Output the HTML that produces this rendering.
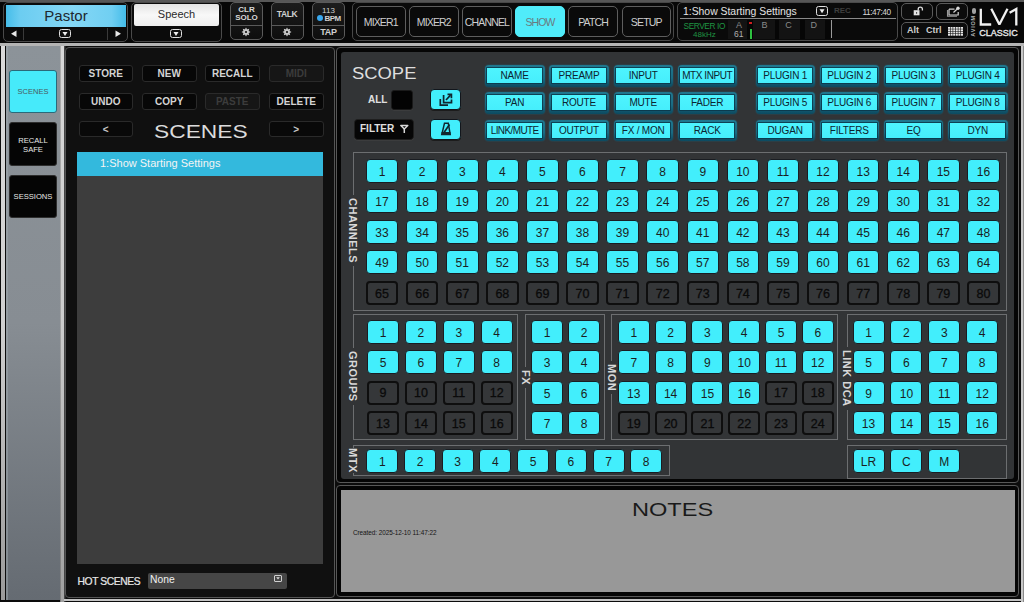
<!DOCTYPE html><html><head><meta charset="utf-8"><style>
*{margin:0;padding:0;box-sizing:border-box}
html,body{width:1024px;height:602px;overflow:hidden;background:#0c0c0c;font-family:"Liberation Sans",sans-serif;position:relative}
.ab{position:absolute}
.t{position:absolute;white-space:nowrap;line-height:1}
.cb{position:absolute;background:#42eefc;border:1.5px solid #1a1d22;border-radius:4px;color:#1a1e22;font-size:12px;display:flex;align-items:center;justify-content:center;line-height:1;padding-top:2px}
.db{position:absolute;background:#353739;border:2px solid #0e0e0e;border-radius:4px;color:#0a0a0a;font-size:12.5px;display:flex;align-items:center;justify-content:center;line-height:1;padding-top:2px;-webkit-text-stroke:0.3px #0a0a0a}
.grp{position:absolute;border:1px solid #6c6e70}
.vl{position:absolute;writing-mode:vertical-rl;color:#d8d8d8;font-weight:bold;font-size:11px;background:#323436;line-height:1;letter-spacing:0.5px}
.sb{position:absolute;background:linear-gradient(#1f7890,#1a6a82 60%,#0c4a60);border-radius:4px;box-shadow:0 0 1.5px #1a6880}
.si{position:absolute;left:2.4px;right:2.6px;top:3.2px;bottom:3.6px;background:linear-gradient(#4ef4fe,#46eefc);box-shadow:0 0 0 0.8px #0b3546;color:#0c2430;font-size:10px;display:flex;align-items:center;justify-content:center;line-height:1;padding-top:1px}
.ib{position:absolute;background:#42eefc;border:1.3px solid #12161c;border-radius:4px;box-shadow:0 1px 0 #1c1c1c}
.kb{position:absolute;background:#090909;border:1px solid #2a2a2a;border-radius:3px;color:#c6c6c6;font-size:10px;font-weight:bold;display:flex;align-items:center;justify-content:center;line-height:1;padding-top:1.5px}
.nb{position:absolute;background:#0a0a0a;border:1px solid #5e5e5e;border-radius:5px;color:#cfcfcf;font-size:10.5px;display:flex;align-items:center;justify-content:center;line-height:1;letter-spacing:-0.85px;padding-top:2px}
.tb{position:absolute;background:linear-gradient(#1c1c1c,#0e0e0e);border:1px solid #5a5a5a;border-radius:5px}
</style></head><body>
<div class="ab" style="left:0;top:0;width:1024px;height:44px;background:#070707"></div>
<div class="ab" style="left:0;top:0;width:1024px;height:2px;background:#575757"></div>
<div class="ab" style="left:0;top:43px;width:1024px;height:3px;background:#b4b4b4"></div>
<div class="ab" style="left:3px;top:2px;width:125px;height:40px;background:#0b0b0b;border:1px solid #4a4a4a;border-radius:5px"></div>
<div class="ab" style="left:6px;top:5px;width:120px;height:22px;background:linear-gradient(90deg,#46bde9,#6ccdf1 12%,#84d7f5 55%,#70cff2 88%,#44bce9);"></div>
<div class="t" style="left:6px;top:8px;width:120px;text-align:center;font-size:15px;color:#202830">Pastor</div>
<div class="ab" style="left:23px;top:28px;width:1px;height:12px;background:#3a3a3a"></div>
<div class="ab" style="left:107px;top:28px;width:1px;height:12px;background:#3a3a3a"></div>
<svg class="ab" style="left:9px;top:29px" width="10" height="10"><polygon points="7.5,1.5 7.5,8 2,4.8" fill="#e8e8e8"/></svg>
<svg class="ab" style="left:113px;top:29px" width="10" height="10"><polygon points="2.5,1.5 2.5,8 8,4.8" fill="#e8e8e8"/></svg>
<div class="ab" style="left:58.5px;top:28.8px;width:12px;height:9.5px;border:1.5px solid #e0e0e0;border-radius:2.5px;background:#111"></div>
<svg class="ab" style="left:58.5px;top:28.8px" width="12" height="9.5"><polygon points="3.5,2.95 8.5,2.95 6.0,6.95" fill="#f0f0f0"/></svg>
<div class="ab" style="left:131px;top:2px;width:91px;height:40px;background:#0b0b0b;border:1px solid #4a4a4a;border-radius:5px"></div>
<div class="ab" style="left:134px;top:4px;width:85px;height:22px;background:linear-gradient(#e4e4e4,#f8f8f8 50%,#eeeeee);border-radius:2px"></div>
<div class="t" style="left:134px;top:9px;width:85px;text-align:center;font-size:11px;color:#2a2a2a">Speech</div>
<div class="ab" style="left:170px;top:28.8px;width:12px;height:9.5px;border:1.5px solid #e0e0e0;border-radius:2.5px;background:#111"></div>
<svg class="ab" style="left:170px;top:28.8px" width="12" height="9.5"><polygon points="3.5,2.95 8.5,2.95 6.0,6.95" fill="#f0f0f0"/></svg>
<div class="tb" style="left:230px;top:2px;width:33px;height:38px"></div>
<div class="ab" style="left:231px;top:25px;width:31px;height:1px;background:#5a5a5a"></div>
<div class="tb" style="left:271px;top:2px;width:33px;height:38px"></div>
<div class="ab" style="left:272px;top:25px;width:31px;height:1px;background:#5a5a5a"></div>
<div class="tb" style="left:312px;top:2px;width:33px;height:38px"></div>
<div class="ab" style="left:313px;top:25px;width:31px;height:1px;background:#5a5a5a"></div>
<div class="t" style="left:230px;top:6px;width:33px;text-align:center;font-size:8px;font-weight:bold;color:#d8d8d8;line-height:8px">CLR<br>SOLO</div>
<div class="t" style="left:270.5px;top:10px;width:33px;text-align:center;font-size:8.5px;font-weight:bold;color:#d0d0d0;letter-spacing:-0.4px">TALK</div>
<div class="t" style="left:312px;top:6.8px;width:33px;text-align:center;font-size:8px;color:#d0d0d0">113</div>
<div class="ab" style="left:317px;top:15px;width:6px;height:6px;border-radius:50%;background:#39a8ee"></div>
<div class="t" style="left:324.5px;top:14.8px;font-size:8px;font-weight:bold;color:#d0d0d0;letter-spacing:-0.5px">BPM</div>
<div class="t" style="left:312px;top:27.5px;width:33px;text-align:center;font-size:9px;font-weight:bold;color:#d0d0d0;letter-spacing:-0.3px">TAP</div>
<svg class="ab" style="left:240.7px;top:27px" width="10" height="10" viewBox="-5 -5 10 10"><g fill="#c8c8c8"><circle r="3"/><path d="M-1 -2.8 L0 -4.5 L1 -2.8 Z" transform="rotate(0)"/><path d="M-1 -2.8 L0 -4.5 L1 -2.8 Z" transform="rotate(45)"/><path d="M-1 -2.8 L0 -4.5 L1 -2.8 Z" transform="rotate(90)"/><path d="M-1 -2.8 L0 -4.5 L1 -2.8 Z" transform="rotate(135)"/><path d="M-1 -2.8 L0 -4.5 L1 -2.8 Z" transform="rotate(180)"/><path d="M-1 -2.8 L0 -4.5 L1 -2.8 Z" transform="rotate(225)"/><path d="M-1 -2.8 L0 -4.5 L1 -2.8 Z" transform="rotate(270)"/><path d="M-1 -2.8 L0 -4.5 L1 -2.8 Z" transform="rotate(315)"/><circle r="1.1" fill="#111"/></g></svg>
<svg class="ab" style="left:281.8px;top:27px" width="10" height="10" viewBox="-5 -5 10 10"><g fill="#c8c8c8"><circle r="3"/><path d="M-1 -2.8 L0 -4.5 L1 -2.8 Z" transform="rotate(0)"/><path d="M-1 -2.8 L0 -4.5 L1 -2.8 Z" transform="rotate(45)"/><path d="M-1 -2.8 L0 -4.5 L1 -2.8 Z" transform="rotate(90)"/><path d="M-1 -2.8 L0 -4.5 L1 -2.8 Z" transform="rotate(135)"/><path d="M-1 -2.8 L0 -4.5 L1 -2.8 Z" transform="rotate(180)"/><path d="M-1 -2.8 L0 -4.5 L1 -2.8 Z" transform="rotate(225)"/><path d="M-1 -2.8 L0 -4.5 L1 -2.8 Z" transform="rotate(270)"/><path d="M-1 -2.8 L0 -4.5 L1 -2.8 Z" transform="rotate(315)"/><circle r="1.1" fill="#111"/></g></svg>
<div class="ab" style="left:352px;top:2px;width:322px;height:39px;border:1px solid #484848;border-radius:5px;background:#0a0a0a"></div>
<div class="nb" style="left:356.0px;top:6px;width:49.5px;height:31px">MIXER1</div>
<div class="nb" style="left:409.1px;top:6px;width:49.5px;height:31px">MIXER2</div>
<div class="nb" style="left:462.2px;top:6px;width:49.5px;height:31px">CHANNEL</div>
<div class="nb" style="left:515.3px;top:6px;width:49.5px;height:31px;background:#50ecfa;border-color:#50ecfa;color:#6a7a80">SHOW</div>
<div class="nb" style="left:568.4px;top:6px;width:49.5px;height:31px">PATCH</div>
<div class="nb" style="left:621.5px;top:6px;width:49.5px;height:31px">SETUP</div>
<div class="ab" style="left:677px;top:2px;width:221px;height:39px;border:1px solid #4a4a4a;border-radius:5px;background:#0a0a0a"></div>
<div class="t" style="left:683px;top:6.8px;font-size:10.4px;color:#e4e4e4">1:Show Starting Settings</div>
<div class="ab" style="left:816px;top:6px;width:12px;height:10px;border:1.5px solid #e0e0e0;border-radius:2.5px;background:#111"></div>
<svg class="ab" style="left:816px;top:6px" width="12" height="10"><polygon points="3.5,3.2 8.5,3.2 6.0,7.2" fill="#f0f0f0"/></svg>
<div class="t" style="left:834px;top:7px;font-size:8px;font-weight:bold;color:#3e3e3e">REC</div>
<div class="t" style="left:862.5px;top:7.5px;font-size:8.3px;color:#d8d8d8;letter-spacing:-0.45px">11:47:40</div>
<div class="ab" style="left:680px;top:18px;width:216px;height:1px;background:#8a8a8a"></div>
<div class="t" style="left:683.5px;top:21.8px;font-size:8.3px;color:#1f9442;letter-spacing:-0.4px">SERVER IO</div>
<div class="t" style="left:693px;top:31px;font-size:8px;color:#1f9442">48kHz</div>
<div class="ab" style="left:728px;top:20px;width:102px;height:19px;background:#131313"></div>
<div class="ab" style="left:746.5px;top:20px;width:6px;height:19px;background:#060606"></div>
<div class="ab" style="left:774.5px;top:20px;width:4px;height:19px;background:#060606"></div>
<div class="ab" style="left:799.5px;top:20px;width:5px;height:19px;background:#060606"></div>
<div class="ab" style="left:825px;top:20px;width:5px;height:19px;background:#060606"></div>
<div class="t" style="left:736px;top:20.5px;font-size:9px;color:#8a8a8a">A</div>
<div class="t" style="left:761.5px;top:20.5px;font-size:9px;color:#8a8a8a">B</div>
<div class="t" style="left:785.3px;top:20.5px;font-size:9px;color:#8a8a8a">C</div>
<div class="t" style="left:810.5px;top:20.5px;font-size:9px;color:#8a8a8a">D</div>
<div class="t" style="left:734px;top:30px;font-size:8.5px;color:#b0b0b0">61</div>
<div class="ab" style="left:749px;top:22px;width:3px;height:2px;background:#d02020"></div>
<div class="ab" style="left:750px;top:29px;width:2px;height:10px;background:#2ec040"></div>
<div class="ab" style="left:831px;top:20px;width:1px;height:18px;background:#9a9a9a"></div>
<div class="tb" style="left:901px;top:3px;width:32px;height:17px;background:#0c0c0c"></div>
<div class="tb" style="left:936px;top:3px;width:32px;height:17px;background:#0c0c0c"></div>
<div class="tb" style="left:901px;top:22px;width:67px;height:17px;background:#0c0c0c"></div>
<svg class="ab" style="left:912px;top:6px" width="12" height="11"><path d="M6.2 4.3 V3.2 A2.1 2.1 0 0 1 10.4 3.2 V4.6" stroke="#e0e0e0" stroke-width="1.3" fill="none"/><rect x="1.7" y="4.2" width="5.8" height="5.1" fill="#e4e4e4"/><rect x="4.2" y="6" width="0.9" height="1.8" fill="#333"/></svg>
<svg class="ab" style="left:946px;top:6px" width="14" height="11"><path d="M1.5 4 V10.2 H11" stroke="#9a9a9a" stroke-width="1.1" fill="none"/><path d="M3 3.2 H8.5 M3 3.2 V9 H12.2 V6" stroke="#d4d4d4" stroke-width="1.2" fill="none"/><path d="M7.5 6.5 L11.2 3" stroke="#d4d4d4" stroke-width="1.2"/><circle cx="12" cy="2.2" r="1.7" fill="#dcdcdc"/></svg>
<div class="t" style="left:907px;top:26px;font-size:9px;font-weight:bold;color:#cfcfcf">Alt</div>
<div class="t" style="left:926px;top:26px;font-size:9px;font-weight:bold;color:#cfcfcf">Ctrl</div>
<svg class="ab" style="left:947.5px;top:26.5px" width="16" height="10"><rect x="0.0" y="0.0" width="2" height="1.8" fill="#e8e8e8"/><rect x="2.6" y="0.0" width="2" height="1.8" fill="#e8e8e8"/><rect x="5.2" y="0.0" width="2" height="1.8" fill="#e8e8e8"/><rect x="7.8" y="0.0" width="2" height="1.8" fill="#e8e8e8"/><rect x="10.4" y="0.0" width="2" height="1.8" fill="#e8e8e8"/><rect x="13.0" y="0.0" width="2" height="1.8" fill="#e8e8e8"/><rect x="0.0" y="2.3" width="2" height="1.8" fill="#e8e8e8"/><rect x="2.6" y="2.3" width="2" height="1.8" fill="#e8e8e8"/><rect x="5.2" y="2.3" width="2" height="1.8" fill="#e8e8e8"/><rect x="7.8" y="2.3" width="2" height="1.8" fill="#e8e8e8"/><rect x="10.4" y="2.3" width="2" height="1.8" fill="#e8e8e8"/><rect x="13.0" y="2.3" width="2" height="1.8" fill="#e8e8e8"/><rect x="0.0" y="4.6" width="2" height="1.8" fill="#e8e8e8"/><rect x="2.6" y="4.6" width="2" height="1.8" fill="#e8e8e8"/><rect x="5.2" y="4.6" width="2" height="1.8" fill="#e8e8e8"/><rect x="7.8" y="4.6" width="2" height="1.8" fill="#e8e8e8"/><rect x="10.4" y="4.6" width="2" height="1.8" fill="#e8e8e8"/><rect x="13.0" y="4.6" width="2" height="1.8" fill="#e8e8e8"/><rect x="0.0" y="6.9" width="2" height="1.8" fill="#e8e8e8"/><rect x="2.6" y="6.9" width="2" height="1.8" fill="#e8e8e8"/><rect x="5.2" y="6.9" width="2" height="1.8" fill="#e8e8e8"/><rect x="7.8" y="6.9" width="2" height="1.8" fill="#e8e8e8"/><rect x="10.4" y="6.9" width="2" height="1.8" fill="#e8e8e8"/><rect x="13.0" y="6.9" width="2" height="1.8" fill="#e8e8e8"/></svg>
<div class="ab" style="left:971.5px;top:8px;width:4px;height:6px;border-radius:2px;background:#a0a0a0"></div>
<div class="t" style="left:970.5px;top:15px;writing-mode:vertical-rl;transform:rotate(180deg);font-size:5.5px;font-weight:bold;color:#b8b8b8;letter-spacing:0.8px">AVIOM</div>
<svg class="ab" style="left:976px;top:6px" width="46" height="22"><path d="M4.8 2.8 V18.5 H15.2" stroke="#f0f0f0" stroke-width="2.3" fill="none"/><path d="M15.3 2.8 L23.4 18.6 L31.5 2.8" stroke="#f0f0f0" stroke-width="2.3" fill="none" stroke-linejoin="bevel"/><path d="M33.6 6.8 L40.3 3 V19.6" stroke="#f0f0f0" stroke-width="2.3" fill="none"/></svg>
<div class="t" style="left:979.3px;top:28.6px;font-size:9px;color:#e8e8e8;letter-spacing:0px;-webkit-text-stroke:0.35px #e8e8e8">CLASSIC</div>
<div class="ab" style="left:1px;top:46px;width:4px;height:554px;background:linear-gradient(#dadada,#d0d0d0 50%,#9a9a9a)"></div>
<div class="ab" style="left:6px;top:45.5px;width:53.5px;height:554.5px;background:linear-gradient(#8c9399,#878d93 50%,#656b72)"></div>
<div class="ab" style="left:6px;top:45.5px;width:1.5px;height:554.5px;background:rgba(160,170,175,0.5)"></div>
<div class="ab" style="left:59.5px;top:46px;width:4.5px;height:556px;background:linear-gradient(#d8d8d8,#cccccc 50%,#a0a0a0)"></div>
<div class="ab" style="left:59.5px;top:46px;width:1px;height:556px;background:rgba(0,0,0,0.2)"></div>
<div class="ab" style="left:64px;top:46px;width:2px;height:556px;background:linear-gradient(90deg,#555,#111)"></div>
<div class="ab" style="left:9px;top:70px;width:48px;height:43px;background:#46eafa;border:1px solid #2a6a7a;border-radius:3px"></div>
<div class="t" style="left:9px;top:87.5px;width:48px;text-align:center;font-size:7.5px;color:#4a5a60">SCENES</div>
<div class="ab" style="left:9px;top:122px;width:48px;height:44px;background:#050505;border:1px solid #2e2e2e;border-radius:3px"></div>
<div class="t" style="left:9px;top:135.5px;width:48px;text-align:center;font-size:7.6px;color:#e8e8e8;line-height:9px">RECALL<br>SAFE</div>
<div class="ab" style="left:9px;top:175px;width:48px;height:43px;background:#050505;border:1px solid #2e2e2e;border-radius:3px"></div>
<div class="t" style="left:9px;top:192.5px;width:48px;text-align:center;font-size:7.6px;color:#e8e8e8">SESSIONS</div>
<div class="ab" style="left:65px;top:47px;width:269.5px;height:550.5px;background:#101010;border:1px solid #555;border-radius:4px"></div>
<div class="kb" style="left:78.5px;top:65px;width:54.5px;height:16.5px;color:#d4d4d4;background:#070707">STORE</div>
<div class="kb" style="left:142px;top:65px;width:54.5px;height:16.5px;color:#d4d4d4;background:#070707">NEW</div>
<div class="kb" style="left:205px;top:65px;width:54.5px;height:16.5px;color:#d4d4d4;background:#070707">RECALL</div>
<div class="kb" style="left:269px;top:65px;width:54.5px;height:16.5px;color:#3c3c3c;background:#161616">MIDI</div>
<div class="kb" style="left:78.5px;top:93px;width:54.5px;height:16.5px;color:#d4d4d4;background:#070707">UNDO</div>
<div class="kb" style="left:142px;top:93px;width:54.5px;height:16.5px;color:#d4d4d4;background:#070707">COPY</div>
<div class="kb" style="left:205px;top:93px;width:54.5px;height:16.5px;color:#3c3c3c;background:#161616">PASTE</div>
<div class="kb" style="left:269px;top:93px;width:54.5px;height:16.5px;color:#d4d4d4;background:#070707">DELETE</div>
<div class="kb" style="left:78.5px;top:121px;width:54.5px;height:16px">&lt;</div>
<div class="kb" style="left:269px;top:121px;width:54.5px;height:16px">&gt;</div>
<div class="t" style="left:153.5px;top:123px;font-size:18px;color:#dcdcdc;transform:scaleX(1.265);transform-origin:0 0">SCENES</div>
<div class="ab" style="left:77px;top:176px;width:246px;height:388px;background:#3d3d3d"></div>
<div class="ab" style="left:77px;top:151.5px;width:246px;height:24.5px;background:#33b9dd"></div>
<div class="t" style="left:100px;top:158px;font-size:11px;color:#f4f4f4">1:Show Starting Settings</div>
<div class="t" style="left:77.5px;top:577px;font-size:10.3px;color:#e8e8e8;letter-spacing:-0.4px;-webkit-text-stroke:0.2px #e8e8e8">HOT SCENES</div>
<div class="ab" style="left:148px;top:573px;width:139px;height:16px;background:#464646;border-radius:2px"></div>
<div class="t" style="left:150px;top:575px;font-size:10.3px;color:#f0f0f0">None</div>
<div class="ab" style="left:274px;top:575px;width:8px;height:7px;border:1px solid #d0d0d0;border-radius:1px"></div>
<svg class="ab" style="left:274px;top:575px" width="8" height="7"><polygon points="2.2,2.2 5.8,2.2 4,4.6" fill="#e0e0e0"/></svg>
<div class="ab" style="left:336px;top:47px;width:683px;height:436px;background:#050505;border:1px solid #585858;border-radius:4px"></div>
<div class="ab" style="left:341px;top:52px;width:673px;height:427px;background:#323436;border-radius:3px"></div>
<div class="ab" style="left:1020.5px;top:46px;width:2px;height:556px;background:#c8c8c8"></div>
<div class="ab" style="left:1022.5px;top:46px;width:1.5px;height:556px;background:#8a8a8a"></div>
<div class="t" style="left:351.5px;top:65px;font-size:16.3px;color:#dedede;transform:scaleX(1.13);transform-origin:0 0">SCOPE</div>
<div class="t" style="left:368px;top:94.5px;font-size:10px;font-weight:bold;color:#e0e0e0">ALL</div>
<div class="ab" style="left:391.3px;top:89.5px;width:21.4px;height:20.5px;background:#030303;border:1.5px solid #1a1a1a;border-radius:3px;box-shadow:0 0.5px 0 #444"></div>
<div class="ab" style="left:353.5px;top:118.9px;width:60.7px;height:20.8px;background:#060606;border:1px solid #1e1e1e;border-radius:3.5px;box-shadow:0 0.5px 0 #444"></div>
<div class="t" style="left:360px;top:124px;font-size:10px;font-weight:bold;color:#e0e0e0">FILTER</div>
<svg class="ab" style="left:400px;top:124px" width="9" height="10"><path d="M0.8 1.5 H7.8 L4.3 5 Z" fill="none" stroke="#d8d8d8" stroke-width="1.4" stroke-linejoin="round"/><path d="M4.3 4.5 V9" stroke="#d8d8d8" stroke-width="1.5"/></svg>
<div class="ib" style="left:430px;top:89px;width:30.5px;height:21px"></div>
<svg class="ab" style="left:438px;top:92px" width="16" height="16"><path d="M2.3 7 V13.2 H10" stroke="#10262e" stroke-width="1.7" fill="none"/><path d="M5.6 3 V10.6 H13.5 V7.5" stroke="#10262e" stroke-width="1.7" fill="none"/><path d="M8 8 L12.5 3.2" stroke="#10262e" stroke-width="1.7" fill="none"/><path d="M9.5 2.4 H13.4 V6.3" stroke="#10262e" stroke-width="1.7" fill="none"/></svg>
<div class="ib" style="left:430px;top:118.5px;width:30.5px;height:21px"></div>
<svg class="ab" style="left:439px;top:121px" width="14" height="16"><path d="M5.5 2.2 H9.3 L11.2 13.5 H2.8 Z" fill="none" stroke="#10262e" stroke-width="1.5"/><path d="M5 11.5 L10.5 3.5" stroke="#10262e" stroke-width="1.6"/><rect x="2.5" y="11" width="9" height="3" fill="#10262e"/></svg>
<div class="sb" style="left:485px;top:65.2px;width:59.5px;height:21.5px"><div class="si" style="letter-spacing:-0.2px;">NAME</div></div>
<div class="sb" style="left:549.3px;top:65.2px;width:59.5px;height:21.5px"><div class="si" style="letter-spacing:-0.2px;">PREAMP</div></div>
<div class="sb" style="left:613.5px;top:65.2px;width:59.5px;height:21.5px"><div class="si" style="letter-spacing:-0.2px;">INPUT</div></div>
<div class="sb" style="left:677.5px;top:65.2px;width:59.5px;height:21.5px"><div class="si" style="letter-spacing:-0.45px;">MTX INPUT</div></div>
<div class="sb" style="left:755.5px;top:65.2px;width:59.5px;height:21.5px"><div class="si" style="letter-spacing:-0.2px;">PLUGIN 1</div></div>
<div class="sb" style="left:819.6px;top:65.2px;width:59.5px;height:21.5px"><div class="si" style="letter-spacing:-0.2px;">PLUGIN 2</div></div>
<div class="sb" style="left:883.8px;top:65.2px;width:59.5px;height:21.5px"><div class="si" style="letter-spacing:-0.2px;">PLUGIN 3</div></div>
<div class="sb" style="left:948px;top:65.2px;width:59.5px;height:21.5px"><div class="si" style="letter-spacing:-0.2px;">PLUGIN 4</div></div>
<div class="sb" style="left:485px;top:92.3px;width:59.5px;height:21.5px"><div class="si" style="letter-spacing:-0.2px;">PAN</div></div>
<div class="sb" style="left:549.3px;top:92.3px;width:59.5px;height:21.5px"><div class="si" style="letter-spacing:-0.2px;">ROUTE</div></div>
<div class="sb" style="left:613.5px;top:92.3px;width:59.5px;height:21.5px"><div class="si" style="letter-spacing:-0.2px;">MUTE</div></div>
<div class="sb" style="left:677.5px;top:92.3px;width:59.5px;height:21.5px"><div class="si" style="letter-spacing:-0.2px;">FADER</div></div>
<div class="sb" style="left:755.5px;top:92.3px;width:59.5px;height:21.5px"><div class="si" style="letter-spacing:-0.2px;">PLUGIN 5</div></div>
<div class="sb" style="left:819.6px;top:92.3px;width:59.5px;height:21.5px"><div class="si" style="letter-spacing:-0.2px;">PLUGIN 6</div></div>
<div class="sb" style="left:883.8px;top:92.3px;width:59.5px;height:21.5px"><div class="si" style="letter-spacing:-0.2px;">PLUGIN 7</div></div>
<div class="sb" style="left:948px;top:92.3px;width:59.5px;height:21.5px"><div class="si" style="letter-spacing:-0.2px;">PLUGIN 8</div></div>
<div class="sb" style="left:485px;top:119.6px;width:59.5px;height:21.5px"><div class="si" style="letter-spacing:-0.6px;">LINK/MUTE</div></div>
<div class="sb" style="left:549.3px;top:119.6px;width:59.5px;height:21.5px"><div class="si" style="letter-spacing:-0.2px;">OUTPUT</div></div>
<div class="sb" style="left:613.5px;top:119.6px;width:59.5px;height:21.5px"><div class="si" style="letter-spacing:-0.2px;">FX / MON</div></div>
<div class="sb" style="left:677.5px;top:119.6px;width:59.5px;height:21.5px"><div class="si" style="letter-spacing:-0.2px;">RACK</div></div>
<div class="sb" style="left:755.5px;top:119.6px;width:59.5px;height:21.5px"><div class="si" style="letter-spacing:-0.2px;">DUGAN</div></div>
<div class="sb" style="left:819.6px;top:119.6px;width:59.5px;height:21.5px"><div class="si" style="letter-spacing:-0.2px;">FILTERS</div></div>
<div class="sb" style="left:883.8px;top:119.6px;width:59.5px;height:21.5px"><div class="si" style="letter-spacing:-0.2px;">EQ</div></div>
<div class="sb" style="left:948px;top:119.6px;width:59.5px;height:21.5px"><div class="si" style="letter-spacing:-0.2px;">DYN</div></div>
<div class="grp" style="left:353px;top:152px;width:654px;height:159px"></div>
<div class="cb" style="left:365.8px;top:158.8px;width:32.5px;height:24px">1</div>
<div class="cb" style="left:405.9px;top:158.8px;width:32.5px;height:24px">2</div>
<div class="cb" style="left:446.0px;top:158.8px;width:32.5px;height:24px">3</div>
<div class="cb" style="left:486.1px;top:158.8px;width:32.5px;height:24px">4</div>
<div class="cb" style="left:526.2px;top:158.8px;width:32.5px;height:24px">5</div>
<div class="cb" style="left:566.2px;top:158.8px;width:32.5px;height:24px">6</div>
<div class="cb" style="left:606.3px;top:158.8px;width:32.5px;height:24px">7</div>
<div class="cb" style="left:646.4px;top:158.8px;width:32.5px;height:24px">8</div>
<div class="cb" style="left:686.5px;top:158.8px;width:32.5px;height:24px">9</div>
<div class="cb" style="left:726.6px;top:158.8px;width:32.5px;height:24px">10</div>
<div class="cb" style="left:766.7px;top:158.8px;width:32.5px;height:24px">11</div>
<div class="cb" style="left:806.8px;top:158.8px;width:32.5px;height:24px">12</div>
<div class="cb" style="left:846.9px;top:158.8px;width:32.5px;height:24px">13</div>
<div class="cb" style="left:887.0px;top:158.8px;width:32.5px;height:24px">14</div>
<div class="cb" style="left:927.1px;top:158.8px;width:32.5px;height:24px">15</div>
<div class="cb" style="left:967.2px;top:158.8px;width:32.5px;height:24px">16</div>
<div class="cb" style="left:365.8px;top:189.3px;width:32.5px;height:24px">17</div>
<div class="cb" style="left:405.9px;top:189.3px;width:32.5px;height:24px">18</div>
<div class="cb" style="left:446.0px;top:189.3px;width:32.5px;height:24px">19</div>
<div class="cb" style="left:486.1px;top:189.3px;width:32.5px;height:24px">20</div>
<div class="cb" style="left:526.2px;top:189.3px;width:32.5px;height:24px">21</div>
<div class="cb" style="left:566.2px;top:189.3px;width:32.5px;height:24px">22</div>
<div class="cb" style="left:606.3px;top:189.3px;width:32.5px;height:24px">23</div>
<div class="cb" style="left:646.4px;top:189.3px;width:32.5px;height:24px">24</div>
<div class="cb" style="left:686.5px;top:189.3px;width:32.5px;height:24px">25</div>
<div class="cb" style="left:726.6px;top:189.3px;width:32.5px;height:24px">26</div>
<div class="cb" style="left:766.7px;top:189.3px;width:32.5px;height:24px">27</div>
<div class="cb" style="left:806.8px;top:189.3px;width:32.5px;height:24px">28</div>
<div class="cb" style="left:846.9px;top:189.3px;width:32.5px;height:24px">29</div>
<div class="cb" style="left:887.0px;top:189.3px;width:32.5px;height:24px">30</div>
<div class="cb" style="left:927.1px;top:189.3px;width:32.5px;height:24px">31</div>
<div class="cb" style="left:967.2px;top:189.3px;width:32.5px;height:24px">32</div>
<div class="cb" style="left:365.8px;top:219.8px;width:32.5px;height:24px">33</div>
<div class="cb" style="left:405.9px;top:219.8px;width:32.5px;height:24px">34</div>
<div class="cb" style="left:446.0px;top:219.8px;width:32.5px;height:24px">35</div>
<div class="cb" style="left:486.1px;top:219.8px;width:32.5px;height:24px">36</div>
<div class="cb" style="left:526.2px;top:219.8px;width:32.5px;height:24px">37</div>
<div class="cb" style="left:566.2px;top:219.8px;width:32.5px;height:24px">38</div>
<div class="cb" style="left:606.3px;top:219.8px;width:32.5px;height:24px">39</div>
<div class="cb" style="left:646.4px;top:219.8px;width:32.5px;height:24px">40</div>
<div class="cb" style="left:686.5px;top:219.8px;width:32.5px;height:24px">41</div>
<div class="cb" style="left:726.6px;top:219.8px;width:32.5px;height:24px">42</div>
<div class="cb" style="left:766.7px;top:219.8px;width:32.5px;height:24px">43</div>
<div class="cb" style="left:806.8px;top:219.8px;width:32.5px;height:24px">44</div>
<div class="cb" style="left:846.9px;top:219.8px;width:32.5px;height:24px">45</div>
<div class="cb" style="left:887.0px;top:219.8px;width:32.5px;height:24px">46</div>
<div class="cb" style="left:927.1px;top:219.8px;width:32.5px;height:24px">47</div>
<div class="cb" style="left:967.2px;top:219.8px;width:32.5px;height:24px">48</div>
<div class="cb" style="left:365.8px;top:250.3px;width:32.5px;height:24px">49</div>
<div class="cb" style="left:405.9px;top:250.3px;width:32.5px;height:24px">50</div>
<div class="cb" style="left:446.0px;top:250.3px;width:32.5px;height:24px">51</div>
<div class="cb" style="left:486.1px;top:250.3px;width:32.5px;height:24px">52</div>
<div class="cb" style="left:526.2px;top:250.3px;width:32.5px;height:24px">53</div>
<div class="cb" style="left:566.2px;top:250.3px;width:32.5px;height:24px">54</div>
<div class="cb" style="left:606.3px;top:250.3px;width:32.5px;height:24px">55</div>
<div class="cb" style="left:646.4px;top:250.3px;width:32.5px;height:24px">56</div>
<div class="cb" style="left:686.5px;top:250.3px;width:32.5px;height:24px">57</div>
<div class="cb" style="left:726.6px;top:250.3px;width:32.5px;height:24px">58</div>
<div class="cb" style="left:766.7px;top:250.3px;width:32.5px;height:24px">59</div>
<div class="cb" style="left:806.8px;top:250.3px;width:32.5px;height:24px">60</div>
<div class="cb" style="left:846.9px;top:250.3px;width:32.5px;height:24px">61</div>
<div class="cb" style="left:887.0px;top:250.3px;width:32.5px;height:24px">62</div>
<div class="cb" style="left:927.1px;top:250.3px;width:32.5px;height:24px">63</div>
<div class="cb" style="left:967.2px;top:250.3px;width:32.5px;height:24px">64</div>
<div class="db" style="left:365.8px;top:280.8px;width:32.5px;height:24px">65</div>
<div class="db" style="left:405.9px;top:280.8px;width:32.5px;height:24px">66</div>
<div class="db" style="left:446.0px;top:280.8px;width:32.5px;height:24px">67</div>
<div class="db" style="left:486.1px;top:280.8px;width:32.5px;height:24px">68</div>
<div class="db" style="left:526.2px;top:280.8px;width:32.5px;height:24px">69</div>
<div class="db" style="left:566.2px;top:280.8px;width:32.5px;height:24px">70</div>
<div class="db" style="left:606.3px;top:280.8px;width:32.5px;height:24px">71</div>
<div class="db" style="left:646.4px;top:280.8px;width:32.5px;height:24px">72</div>
<div class="db" style="left:686.5px;top:280.8px;width:32.5px;height:24px">73</div>
<div class="db" style="left:726.6px;top:280.8px;width:32.5px;height:24px">74</div>
<div class="db" style="left:766.7px;top:280.8px;width:32.5px;height:24px">75</div>
<div class="db" style="left:806.8px;top:280.8px;width:32.5px;height:24px">76</div>
<div class="db" style="left:846.9px;top:280.8px;width:32.5px;height:24px">77</div>
<div class="db" style="left:887.0px;top:280.8px;width:32.5px;height:24px">78</div>
<div class="db" style="left:927.1px;top:280.8px;width:32.5px;height:24px">79</div>
<div class="db" style="left:967.2px;top:280.8px;width:32.5px;height:24px">80</div>
<div class="vl" style="left:347px;top:195px;padding:3px 0">CHANNELS</div>
<div class="grp" style="left:353px;top:314px;width:165px;height:126px"></div>
<div class="cb" style="left:367.0px;top:319.5px;width:32px;height:24px">1</div>
<div class="cb" style="left:404.9px;top:319.5px;width:32px;height:24px">2</div>
<div class="cb" style="left:442.8px;top:319.5px;width:32px;height:24px">3</div>
<div class="cb" style="left:480.7px;top:319.5px;width:32px;height:24px">4</div>
<div class="cb" style="left:367.0px;top:350.0px;width:32px;height:24px">5</div>
<div class="cb" style="left:404.9px;top:350.0px;width:32px;height:24px">6</div>
<div class="cb" style="left:442.8px;top:350.0px;width:32px;height:24px">7</div>
<div class="cb" style="left:480.7px;top:350.0px;width:32px;height:24px">8</div>
<div class="db" style="left:367.0px;top:380.5px;width:32px;height:24px">9</div>
<div class="db" style="left:404.9px;top:380.5px;width:32px;height:24px">10</div>
<div class="db" style="left:442.8px;top:380.5px;width:32px;height:24px">11</div>
<div class="db" style="left:480.7px;top:380.5px;width:32px;height:24px">12</div>
<div class="db" style="left:367.0px;top:411.0px;width:32px;height:24px">13</div>
<div class="db" style="left:404.9px;top:411.0px;width:32px;height:24px">14</div>
<div class="db" style="left:442.8px;top:411.0px;width:32px;height:24px">15</div>
<div class="db" style="left:480.7px;top:411.0px;width:32px;height:24px">16</div>
<div class="vl" style="left:347px;top:348px;padding:3px 0">GROUPS</div>
<div class="grp" style="left:525px;top:314px;width:80px;height:126px"></div>
<div class="cb" style="left:531.0px;top:319.5px;width:32px;height:24px">1</div>
<div class="cb" style="left:568.2px;top:319.5px;width:32px;height:24px">2</div>
<div class="cb" style="left:531.0px;top:350.0px;width:32px;height:24px">3</div>
<div class="cb" style="left:568.2px;top:350.0px;width:32px;height:24px">4</div>
<div class="cb" style="left:531.0px;top:380.5px;width:32px;height:24px">5</div>
<div class="cb" style="left:568.2px;top:380.5px;width:32px;height:24px">6</div>
<div class="cb" style="left:531.0px;top:411.0px;width:32px;height:24px">7</div>
<div class="cb" style="left:568.2px;top:411.0px;width:32px;height:24px">8</div>
<div class="vl" style="left:520px;top:367px;padding:3px 0">FX</div>
<div class="grp" style="left:611px;top:314px;width:227px;height:126px"></div>
<div class="cb" style="left:617.8px;top:319.5px;width:32px;height:24px">1</div>
<div class="cb" style="left:654.6px;top:319.5px;width:32px;height:24px">2</div>
<div class="cb" style="left:691.4px;top:319.5px;width:32px;height:24px">3</div>
<div class="cb" style="left:728.2px;top:319.5px;width:32px;height:24px">4</div>
<div class="cb" style="left:765.0px;top:319.5px;width:32px;height:24px">5</div>
<div class="cb" style="left:801.8px;top:319.5px;width:32px;height:24px">6</div>
<div class="cb" style="left:617.8px;top:350.0px;width:32px;height:24px">7</div>
<div class="cb" style="left:654.6px;top:350.0px;width:32px;height:24px">8</div>
<div class="cb" style="left:691.4px;top:350.0px;width:32px;height:24px">9</div>
<div class="cb" style="left:728.2px;top:350.0px;width:32px;height:24px">10</div>
<div class="cb" style="left:765.0px;top:350.0px;width:32px;height:24px">11</div>
<div class="cb" style="left:801.8px;top:350.0px;width:32px;height:24px">12</div>
<div class="cb" style="left:617.8px;top:380.5px;width:32px;height:24px">13</div>
<div class="cb" style="left:654.6px;top:380.5px;width:32px;height:24px">14</div>
<div class="cb" style="left:691.4px;top:380.5px;width:32px;height:24px">15</div>
<div class="cb" style="left:728.2px;top:380.5px;width:32px;height:24px">16</div>
<div class="db" style="left:765.0px;top:380.5px;width:32px;height:24px">17</div>
<div class="db" style="left:801.8px;top:380.5px;width:32px;height:24px">18</div>
<div class="db" style="left:617.8px;top:411.0px;width:32px;height:24px">19</div>
<div class="db" style="left:654.6px;top:411.0px;width:32px;height:24px">20</div>
<div class="db" style="left:691.4px;top:411.0px;width:32px;height:24px">21</div>
<div class="db" style="left:728.2px;top:411.0px;width:32px;height:24px">22</div>
<div class="db" style="left:765.0px;top:411.0px;width:32px;height:24px">23</div>
<div class="db" style="left:801.8px;top:411.0px;width:32px;height:24px">24</div>
<div class="vl" style="left:606px;top:361px;padding:3px 0">MON</div>
<div class="grp" style="left:847px;top:314px;width:160px;height:126px"></div>
<div class="cb" style="left:852.5px;top:319.5px;width:32px;height:24px">1</div>
<div class="cb" style="left:890.4px;top:319.5px;width:32px;height:24px">2</div>
<div class="cb" style="left:928.3px;top:319.5px;width:32px;height:24px">3</div>
<div class="cb" style="left:966.2px;top:319.5px;width:32px;height:24px">4</div>
<div class="cb" style="left:852.5px;top:350.0px;width:32px;height:24px">5</div>
<div class="cb" style="left:890.4px;top:350.0px;width:32px;height:24px">6</div>
<div class="cb" style="left:928.3px;top:350.0px;width:32px;height:24px">7</div>
<div class="cb" style="left:966.2px;top:350.0px;width:32px;height:24px">8</div>
<div class="cb" style="left:852.5px;top:380.5px;width:32px;height:24px">9</div>
<div class="cb" style="left:890.4px;top:380.5px;width:32px;height:24px">10</div>
<div class="cb" style="left:928.3px;top:380.5px;width:32px;height:24px">11</div>
<div class="cb" style="left:966.2px;top:380.5px;width:32px;height:24px">12</div>
<div class="cb" style="left:852.5px;top:411.0px;width:32px;height:24px">13</div>
<div class="cb" style="left:890.4px;top:411.0px;width:32px;height:24px">14</div>
<div class="cb" style="left:928.3px;top:411.0px;width:32px;height:24px">15</div>
<div class="cb" style="left:966.2px;top:411.0px;width:32px;height:24px">16</div>
<div class="vl" style="left:841px;top:347px;padding:3px 0">LINK DCA</div>
<div class="grp" style="left:353px;top:445px;width:317px;height:31px"></div>
<div class="cb" style="left:366.3px;top:448.8px;width:32px;height:24px">1</div>
<div class="cb" style="left:404.0px;top:448.8px;width:32px;height:24px">2</div>
<div class="cb" style="left:441.7px;top:448.8px;width:32px;height:24px">3</div>
<div class="cb" style="left:479.4px;top:448.8px;width:32px;height:24px">4</div>
<div class="cb" style="left:517.1px;top:448.8px;width:32px;height:24px">5</div>
<div class="cb" style="left:554.8px;top:448.8px;width:32px;height:24px">6</div>
<div class="cb" style="left:592.5px;top:448.8px;width:32px;height:24px">7</div>
<div class="cb" style="left:630.2px;top:448.8px;width:32px;height:24px">8</div>
<div class="vl" style="left:347px;top:448px;padding:0">MTX</div>
<div class="grp" style="left:847px;top:445px;width:160px;height:34px"></div>
<div class="cb" style="left:852.5px;top:449.3px;width:32px;height:24px">LR</div>
<div class="cb" style="left:890.4px;top:449.3px;width:32px;height:24px">C</div>
<div class="cb" style="left:928.3px;top:449.3px;width:32px;height:24px">M</div>
<div class="ab" style="left:336px;top:485px;width:683px;height:112px;background:#050505;border:1px solid #585858;border-radius:4px"></div>
<div class="ab" style="left:341px;top:489.5px;width:674px;height:102.5px;background:#989898"></div>
<div class="t" style="left:632px;top:500.5px;font-size:18px;color:#1a1a1a;transform:scaleX(1.31);transform-origin:0 0">NOTES</div>
<div class="t" style="left:353px;top:530.2px;font-size:6.4px;color:#151515;letter-spacing:-0.06px">Created: 2025-12-10 11:47:22</div>
<div class="ab" style="left:64px;top:598.8px;width:957px;height:2px;background:#c4c4c4"></div>
</body></html>
